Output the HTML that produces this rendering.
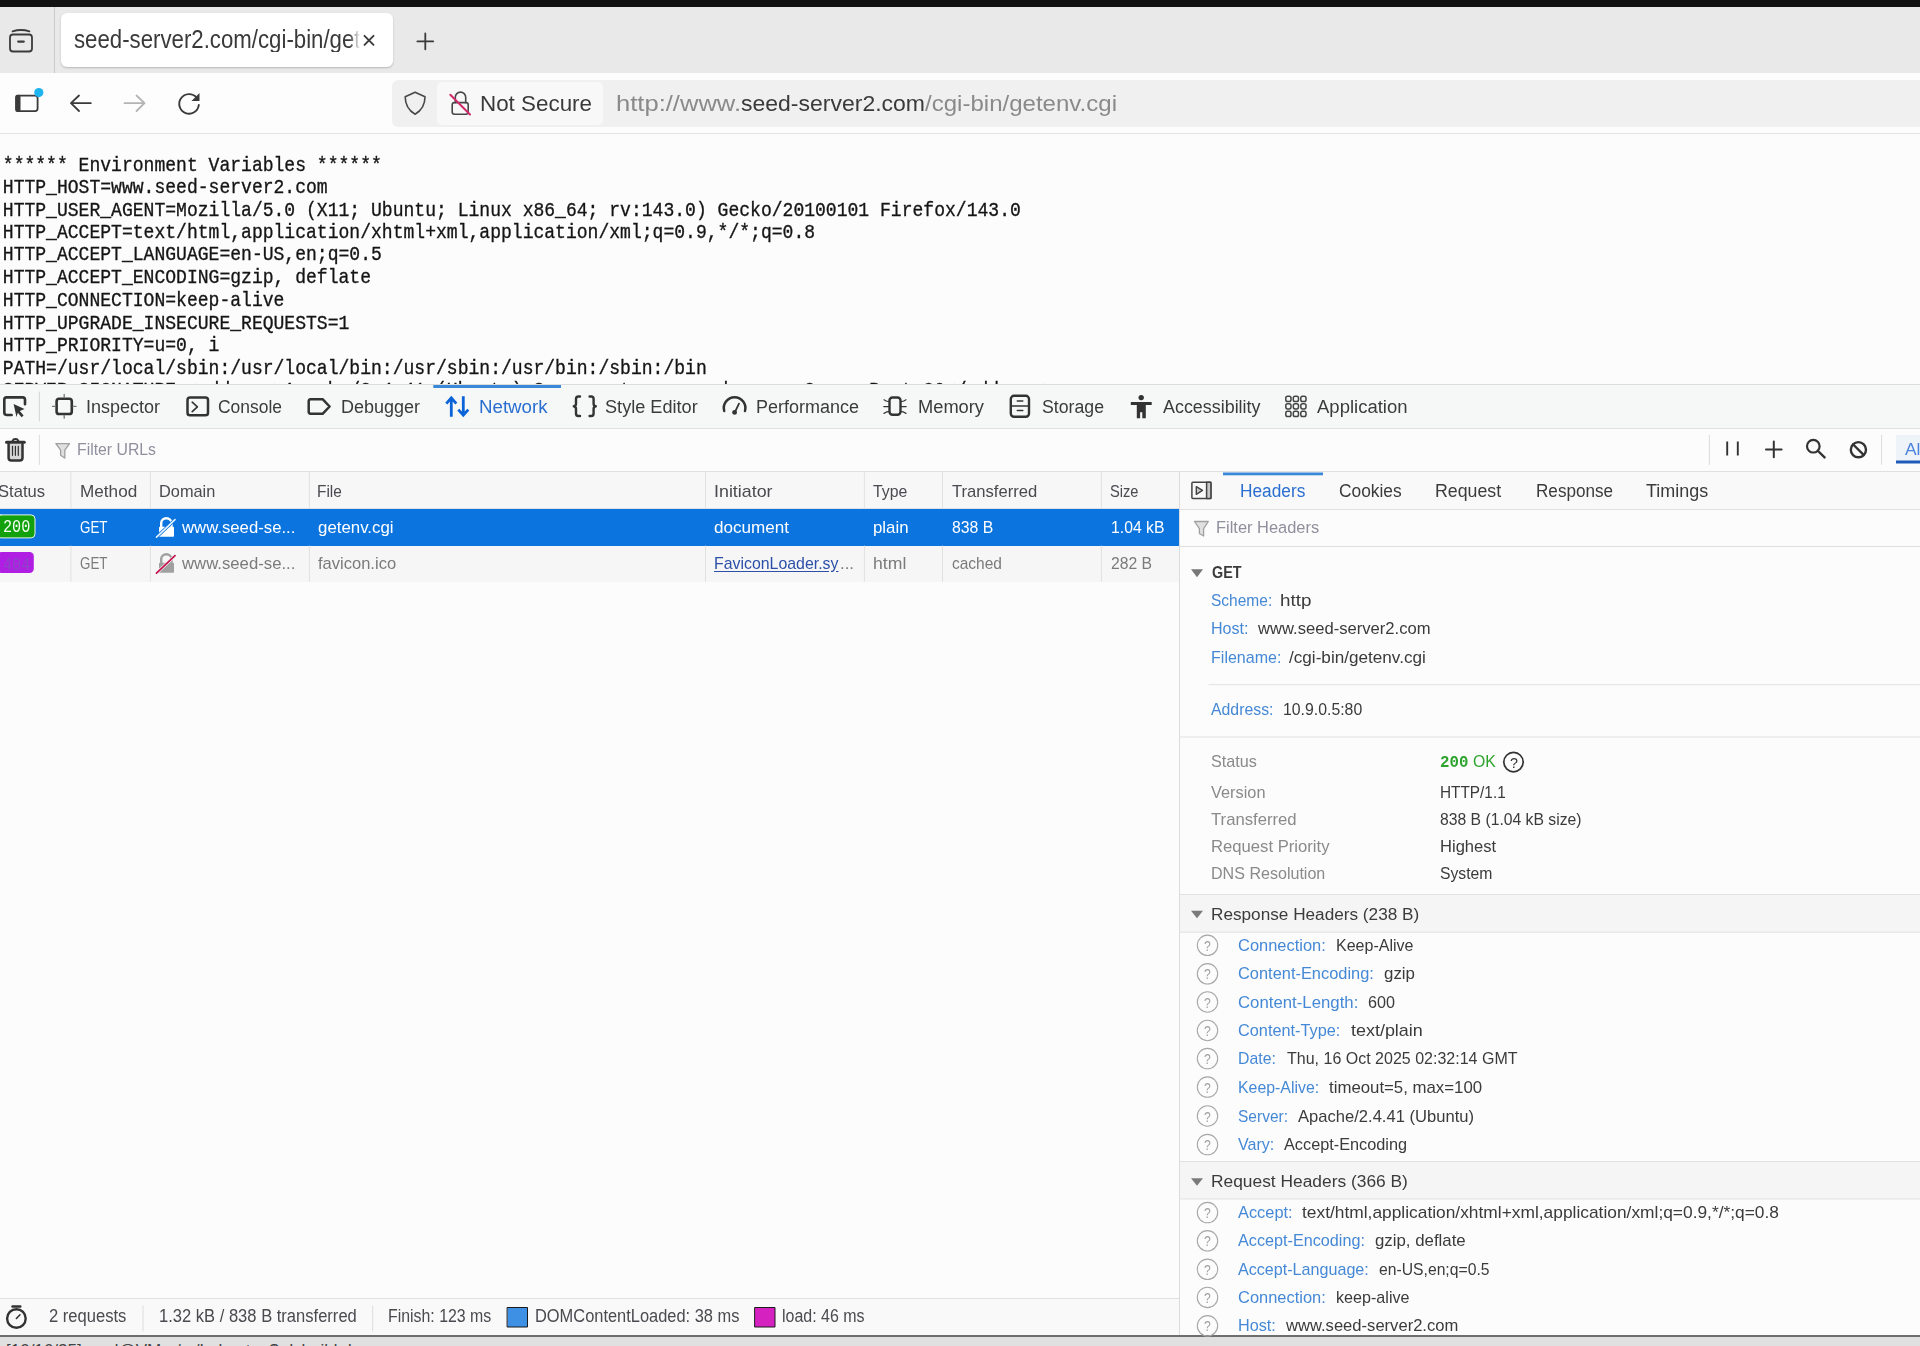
<!DOCTYPE html>
<html><head><meta charset="utf-8">
<style>
html,body{margin:0;padding:0;}
body{width:1920px;height:1346px;overflow:hidden;position:relative;background:#fcfcfc;font-family:"Liberation Sans",sans-serif;}
.a{position:absolute;}
.tx{position:absolute;white-space:pre;line-height:1;transform-origin:0 0;}
svg{position:absolute;overflow:visible;}
#topbar{left:0;top:0;width:1920px;height:7px;background:#121212;}
#tabbar{left:0;top:7px;width:1920px;height:66px;background:#e9e9e9;}
#tabdiv{left:54px;top:7px;width:1px;height:66px;background:#c9c9c9;}
#tab{left:61px;top:13px;width:332px;height:54px;background:#fff;border-radius:6px;box-shadow:0 1px 2px rgba(0,0,0,.22);}
#nav{left:0;top:73px;width:1920px;height:60px;background:#fdfdfd;}
#navline{left:0;top:133px;width:1920px;height:1px;background:#e3e3e3;}
#url{left:392px;top:79.5px;width:1540px;height:47.3px;background:#f0f0f0;border-radius:6px;}
#chip{left:436.5px;top:81.5px;width:166.5px;height:43.3px;background:#f8f8f8;border-radius:5px;}
#content{left:0;top:134px;width:1920px;height:250px;background:#fcfcfc;overflow:hidden;}
#pre{position:absolute;left:2.8px;top:20.1px;margin:0;font-family:"Liberation Mono",monospace;font-size:18.06px;line-height:20.09px;color:#151515;-webkit-text-stroke:0.3px #151515;white-space:pre;transform:scaleY(1.12);transform-origin:0 0;}
#dt{left:0;top:384px;width:1920px;height:952px;background:#fcfcfc;}
#dtline{left:0;top:384px;width:1920px;height:1px;background:#dcdcde;}
#toolbar{left:0;top:385px;width:1920px;height:43px;background:#f6f7f7;}
#tbline{left:0;top:428px;width:1920px;height:1px;background:#e0e0e2;}
#filterbar{left:0;top:429px;width:1920px;height:42px;background:#fcfcfc;}
#fbline{left:0;top:471px;width:1920px;height:1px;background:#e0e0e2;}
#thead{left:0;top:472px;width:1180px;height:37px;background:#f7f7f8;}
#theadline{left:0;top:508px;width:1180px;height:1px;background:#e0e0e2;}
#row1{left:0;top:509px;width:1179px;height:36.5px;background:#0b74de;}
#row2{left:0;top:545.5px;width:1179px;height:36px;background:#f6f6f7;}
.cd{position:absolute;width:1px;background:#e3e3e5;}
#vdiv{left:1179px;top:471px;width:1px;height:865px;background:#dcdcde;}
#ptabs{left:1180px;top:472px;width:740px;height:37px;background:#f9f9fa;}
#ptline{left:1180px;top:508.5px;width:740px;height:1px;background:#e0e0e2;}
#pfline{left:1180px;top:545.5px;width:740px;height:1px;background:#e0e0e2;}
#statusbar{left:0;top:1298.5px;width:1179px;height:37px;background:#f9f9fa;}
#sbline{left:0;top:1298px;width:1179px;height:1px;background:#e0e0e2;}
#bottomline{left:0;top:1335px;width:1920px;height:2px;background:#6e6e6e;}
#bottom{left:0;top:1337px;width:1920px;height:9px;background:#e0e0e0;}
.fade{-webkit-mask-image:linear-gradient(to right,#000 88%,transparent 100%);}
</style></head><body>
<div class="a" id="topbar"></div>
<div class="a" id="tabbar"></div>
<div class="a" id="tabdiv"></div>
<div class="a" id="tab"></div>
<div class="a" id="nav"></div>
<div class="a" id="navline"></div>
<div class="a" id="url"></div>
<div class="a" id="chip"></div>
<div class="a" id="content"><pre id="pre">****** Environment Variables ******
HTTP_HOST=www.seed-server2.com
HTTP_USER_AGENT=Mozilla/5.0 (X11; Ubuntu; Linux x86_64; rv:143.0) Gecko/20100101 Firefox/143.0
HTTP_ACCEPT=text/html,application/xhtml+xml,application/xml;q=0.9,*/*;q=0.8
HTTP_ACCEPT_LANGUAGE=en-US,en;q=0.5
HTTP_ACCEPT_ENCODING=gzip, deflate
HTTP_CONNECTION=keep-alive
HTTP_UPGRADE_INSECURE_REQUESTS=1
HTTP_PRIORITY=u=0, i
PATH=/usr/local/sbin:/usr/local/bin:/usr/sbin:/usr/bin:/sbin:/bin
SERVER_SIGNATURE=&lt;address&gt;Apache/2.4.41 (Ubuntu) Server at www.seed-server2.com Port 80&lt;/address&gt;
</pre></div>
<div class="a" id="dt"></div>
<div class="a" id="dtline"></div>
<div class="a" id="toolbar"></div>
<div class="a" id="tbline"></div>
<div class="a" id="filterbar"></div>
<div class="a" id="fbline"></div>
<div class="a" id="thead"></div>
<div class="a" id="theadline"></div>
<div class="a" id="row1"></div>
<div class="a" id="row2"></div>
<div class="a" id="vdiv"></div>
<div class="a" id="ptabs"></div>
<div class="a" id="ptline"></div>
<div class="a" id="pfline"></div>
<div class="a" id="statusbar"></div>
<div class="a" id="sbline"></div>
<div class="a" id="bottomline"></div>
<div class="a" id="bottom" style="overflow:hidden"><div style="position:absolute;left:6px;top:4.2px;font-family:'Liberation Sans',sans-serif;font-size:17px;line-height:20px;color:#444;white-space:pre;">[10/16/25]seed@VM:~/.../Labsetup$ dcbuild dcup</div></div>
<svg width="1920" height="1346" viewBox="0 0 1920 1346" style="left:0;top:0;position:absolute" fill="none" stroke-linecap="round" stroke-linejoin="round">
<!-- tab strip sidebar icon -->
<g stroke="#3c3c3c" stroke-width="1.8">
<rect x="10" y="34.5" width="22" height="17" rx="3"/>
<path d="M12.6 31.4 Q21 28.6 29.4 31.4"/>
<path d="M18.2 41.6 H23.8" stroke-width="2.2"/>
</g>
<!-- tab close x -->
<path d="M364.5 35.8 L373.5 44.8 M373.5 35.8 L364.5 44.8" stroke="#3a3a3a" stroke-width="1.9"/>
<!-- new tab + -->
<path d="M425.3 33.5 V49.3 M417.4 41.4 H433.2" stroke="#3a3a3a" stroke-width="1.8"/>
<!-- sidebar toggle nav -->
<rect x="16.2" y="95.6" width="21.4" height="15.5" rx="2.5" stroke="#3a3a3a" stroke-width="1.8"/>
<rect x="15.3" y="94.8" width="5.2" height="17.1" rx="2" fill="#3a3a3a"/>
<circle cx="38.8" cy="92.6" r="4.6" fill="#1eb4f0"/>
<!-- back arrow -->
<path d="M71 103.2 H90.8 M79 95.5 L71 103.2 L79 111" stroke="#3a3a3a" stroke-width="1.8"/>
<!-- forward arrow -->
<path d="M124.5 103.2 H144.5 M136.5 95.5 L144.5 103.2 L136.5 111" stroke="#b4b4b4" stroke-width="1.8"/>
<!-- reload -->
<path d="M196.5 97.5 A9.8 9.8 0 1 0 198.8 105" stroke="#3a3a3a" stroke-width="1.9"/>
<path d="M199.5 93 V101 H191.5 Z" fill="#3a3a3a"/>
<!-- shield -->
<path d="M415.1 92.2 L425 96.8 C425 104 422.5 110 415.1 114.2 C407.7 110 405.2 104 405.2 96.8 Z" stroke="#484848" stroke-width="1.6"/>
<!-- lock insecure -->
<g stroke="#484848" stroke-width="1.6">
<path d="M455.3 102.6 V97.3 A5.2 5.2 0 0 1 465.7 97.3 V102.6"/>
<rect x="452.2" y="102.6" width="16" height="11.6" rx="2.2"/>
</g>
<path d="M450.3 94.8 L470 114.5" stroke="#d02a68" stroke-width="2"/>

<!-- devtools toolbar icons -->
<g stroke="#333" stroke-width="2.6">
<!-- pick -->
<path d="M11.6 415 H6.5 A2.4 2.4 0 0 1 4.3 412.6 V399.7 A2.4 2.4 0 0 1 6.5 397.4 H22.7 A2.4 2.4 0 0 1 25 399.7 V404.3"/>
</g>
<path d="M13.6 404 L24.5 409 L19.8 411 L23.6 415.4 L21.6 417.2 L17.8 412.8 L16.5 417 Z" fill="#333"/>
<path d="M39.4 392 V421" stroke="#d4d4d6" stroke-width="1"/>
<!-- inspector -->
<rect x="56.6" y="398.8" width="15.2" height="15.2" rx="2.6" stroke="#333" stroke-width="2.6"/>
<path d="M64.2 394.5 V397.5 M64.2 415.3 V418.2 M52.5 406.4 H55.4 M73 406.4 H76" stroke="#777" stroke-width="1.3"/>
<!-- console -->
<rect x="187.5" y="397.5" width="20.5" height="17.8" rx="2.6" stroke="#333" stroke-width="2.5"/>
<path d="M192.2 402.2 L197.4 406.8 L192.2 411.6" stroke="#333" stroke-width="1.6"/>
<!-- debugger -->
<path d="M310.6 399.2 H322.6 L329.6 406.5 L322.6 413.8 H310.6 A2 2 0 0 1 308.7 411.8 V401.2 A2 2 0 0 1 310.6 399.2 Z" stroke="#333" stroke-width="2.5"/>
<!-- network -->
<g stroke="#0b63d8" stroke-width="2.8" stroke-linecap="butt" stroke-linejoin="miter">
<path d="M451.3 416.7 V397.5 M446.3 403.6 L451.3 397.8 L456.3 403.6"/>
<path d="M463.3 396.2 V415.5 M458.3 409.6 L463.3 415.2 L468.3 409.6"/>
</g>
<!-- braces -->
<g stroke="#333" stroke-width="2.4">
<path d="M580 396.5 H578.5 A2.5 2.5 0 0 0 576 399 V403.8 A2.6 2.6 0 0 1 573.8 406.3 A2.6 2.6 0 0 1 576 408.8 V413.6 A2.5 2.5 0 0 0 578.5 416 H580"/>
<path d="M589.6 396.5 H591.1 A2.5 2.5 0 0 1 593.6 399 V403.8 A2.6 2.6 0 0 0 595.8 406.3 A2.6 2.6 0 0 0 593.6 408.8 V413.6 A2.5 2.5 0 0 1 591.1 416 H589.6"/>
</g>
<!-- performance -->
<path d="M724.2 411 A10.8 10.8 0 1 1 745 411" stroke="#333" stroke-width="2.5"/>
<path d="M734.8 412.3 L739 403.6" stroke="#333" stroke-width="1.8"/>
<circle cx="734.6" cy="412.4" r="2.4" fill="#333"/>
<!-- memory -->
<rect x="889.5" y="397.5" width="11" height="17.3" rx="3" stroke="#333" stroke-width="2.4"/>
<g stroke="#333" stroke-width="1.2">
<path d="M888.5 401.5 C886 401.5 885.5 400.5 884 399.8 M888.5 406.6 H883.8 M888.5 411.7 C886 411.7 885.5 412.7 884 413.4"/>
<path d="M901.5 401.5 C904 401.5 904.5 400.5 906 399.8 M901.5 406.6 H906.2 M901.5 411.7 C904 411.7 904.5 412.7 906 413.4"/>
</g>
<!-- storage -->
<rect x="1010.8" y="395.8" width="18.2" height="21" rx="3.2" stroke="#333" stroke-width="2.4"/>
<path d="M1011 405.9 H1029" stroke="#333" stroke-width="1.5"/>
<path d="M1017.3 401 H1022.8 M1017.3 410.4 H1022.8" stroke="#333" stroke-width="1.5"/>
<!-- accessibility -->
<circle cx="1141.2" cy="397.6" r="2.7" fill="#333"/>
<path d="M1130.8 402 H1151.7 V405 H1145.8 V418.3 H1142.3 V412.2 H1140.1 V418.3 H1136.8 V405 H1130.8 Z" fill="#333"/>
<!-- application grid -->
<g stroke="#444" stroke-width="1.5">
<rect x="1285.8" y="396.3" width="5.2" height="5.2" rx="1.8"/>
<rect x="1293.3" y="396.3" width="5.2" height="5.2" rx="1.8"/>
<rect x="1300.8" y="396.3" width="5.2" height="5.2" rx="1.8"/>
<rect x="1285.8" y="403.7" width="5.2" height="5.2" rx="1.8"/>
<rect x="1293.3" y="403.7" width="5.2" height="5.2" rx="1.8"/>
<rect x="1300.8" y="403.7" width="5.2" height="5.2" rx="1.8"/>
<rect x="1285.8" y="411.3" width="5.2" height="5.2" rx="1.8"/>
<rect x="1293.3" y="411.3" width="5.2" height="5.2" rx="1.8"/>
<rect x="1300.8" y="411.3" width="5.2" height="5.2" rx="1.8"/>
</g>
<!-- network selected underline -->
<rect x="433.3" y="385" width="127.7" height="3" fill="#3b87d8"/>

<!-- filter bar -->
<g stroke="#333">
<path d="M6.5 442.3 H24.3" stroke-width="3"/>
<path d="M12.6 440.8 A3 2.6 0 0 1 18.3 440.8" stroke-width="2" />
<path d="M8.6 444 V457.8 A2.8 2.8 0 0 0 11.4 460.6 H19.7 A2.8 2.8 0 0 0 22.5 457.8 V444" stroke-width="2.5" fill="#d6d6d6"/>
<path d="M12.5 446.3 V455.3 M15.4 446.3 V455.3 M18.3 446.3 V455.3" stroke-width="1.2"/>
</g>
<path d="M39.4 435.3 V464.5" stroke="#dcdcde" stroke-width="1"/>
<path d="M55.9 443.6 H69.5 L64.8 450.2 V458 L60.6 455.3 V450.2 Z" stroke="#a0a0a0" stroke-width="1.3" fill="#e0e0e0"/>
<!-- right side of filter bar -->
<path d="M1709.4 435.3 V464.5 M1881.6 435.3 V464.5" stroke="#dcdcde" stroke-width="1"/>
<path d="M1727.2 441.6 V455.4 M1737.8 441.6 V455.4" stroke="#333" stroke-width="1.9" stroke-linecap="butt"/>
<path d="M1773.8 441.5 V457.3 M1766 449.4 H1781.6" stroke="#333" stroke-width="2"/>
<circle cx="1813.3" cy="446.2" r="6.3" stroke="#333" stroke-width="2.2"/>
<path d="M1818 451 L1824.6 457.4" stroke="#333" stroke-width="2.4"/>
<circle cx="1858.4" cy="449.7" r="7.6" stroke="#333" stroke-width="2.4"/>
<path d="M1853.2 444.5 L1863.6 454.9" stroke="#333" stroke-width="2.4"/>
<rect x="1896" y="435" width="30" height="28" fill="#eef2f9"/>
<rect x="1896" y="460.5" width="30" height="3" fill="#1f5cb8"/>

<!-- table column dividers header -->
<g stroke="#e1e1e3" stroke-width="1">
<path d="M70.9 472 V508 M150.4 472 V508 M309.4 472 V508 M705.5 472 V508 M864.4 472 V508 M942.5 472 V508 M1101.4 472 V508"/>
<path d="M70.9 546 V581.5 M150.4 546 V581.5 M309.4 546 V581.5 M705.5 546 V581.5 M864.4 546 V581.5 M942.5 546 V581.5 M1101.4 546 V581.5"/>
</g>
<!-- badges -->
<rect x="-3" y="514.9" width="38" height="23" rx="4" fill="#12a00c" stroke="#e8f4e8" stroke-width="1"/>
<rect x="-3" y="552.1" width="36.8" height="20.9" rx="4.2" fill="#b11ee3"/>
<!-- domain lock row1 -->
<g>
<path d="M161.2 526.7 V523 A5 4.6 0 0 1 171.5 523 V526.7" stroke="#fff" stroke-width="2.4"/>
<rect x="159" y="526.7" width="15" height="10" rx="0.8" fill="#fff"/>
<path d="M156.5 537.2 L175 519.6" stroke="#0b74de" stroke-width="3.2"/>
<path d="M156.5 537.2 L175 519.6" stroke="#e6f3ff" stroke-width="1.6"/>
</g>
<g>
<path d="M161.2 562.7 V559 A5 4.6 0 0 1 171.5 559 V562.7" stroke="#a0a0a0" stroke-width="2.4"/>
<rect x="159" y="562.7" width="15" height="10" rx="0.8" fill="#a0a0a0"/>
<path d="M156.5 573.2 L175 555.6" stroke="#f5f5f6" stroke-width="3"/>
<path d="M156.5 573.2 L175 555.6" stroke="#c4164f" stroke-width="1.8"/>
</g>

<!-- side panel -->
<rect x="1191.9" y="482.2" width="19" height="16.4" rx="1" stroke="#444" stroke-width="1.5"/>
<rect x="1206.6" y="482.2" width="4.3" height="16.4" fill="#c8c8c8" stroke="#444" stroke-width="1.5"/>
<path d="M1196.3 486.6 L1202.5 490.4 L1196.3 494.3 Z" stroke="#444" stroke-width="1.4" fill="#c8c8c8"/>
<rect x="1223" y="472.5" width="100" height="2.8" fill="#3b87d8"/>
<path d="M1194.5 521.5 H1208.3 L1203.6 528.6 V536 L1199.4 533.5 V528.6 Z" stroke="#a0a0a0" stroke-width="1.3" fill="#e0e0e0"/>
<!-- GET triangle -->
<path d="M1191 569.2 H1203 L1197 577.2 Z" fill="#777"/>
<!-- separators -->
<path d="M1209 684.7 H1920" stroke="#e1e1e3" stroke-width="1"/>
<path d="M1180 737 H1920" stroke="#e1e1e3" stroke-width="1"/>
<!-- status ? -->
<circle cx="1513.5" cy="762.1" r="9.7" stroke="#333" stroke-width="1.7"/>
<!-- sections -->
<rect x="1180" y="894.5" width="740" height="37.7" fill="#f5f5f6"/>
<path d="M1180 894.5 H1920 M1180 932.2 H1920" stroke="#e1e1e3" stroke-width="1"/>
<path d="M1191 910.8 H1203 L1197 918.2 Z" fill="#7a7a7a"/>
<rect x="1180" y="1161.5" width="740" height="37.5" fill="#f5f5f6"/>
<path d="M1180 1161.5 H1920 M1180 1199 H1920" stroke="#e1e1e3" stroke-width="1"/>
<path d="M1191 1178.3 H1203 L1197 1185.7 Z" fill="#7a7a7a"/>
<circle cx="1207.5" cy="945.3" r="10.2" stroke="#a8a8a8" stroke-width="1.1"/>
<circle cx="1207.5" cy="973.8" r="10.2" stroke="#a8a8a8" stroke-width="1.1"/>
<circle cx="1207.5" cy="1002.0" r="10.2" stroke="#a8a8a8" stroke-width="1.1"/>
<circle cx="1207.5" cy="1030.5" r="10.2" stroke="#a8a8a8" stroke-width="1.1"/>
<circle cx="1207.5" cy="1058.6" r="10.2" stroke="#a8a8a8" stroke-width="1.1"/>
<circle cx="1207.5" cy="1087.1" r="10.2" stroke="#a8a8a8" stroke-width="1.1"/>
<circle cx="1207.5" cy="1116.0" r="10.2" stroke="#a8a8a8" stroke-width="1.1"/>
<circle cx="1207.5" cy="1144.6" r="10.2" stroke="#a8a8a8" stroke-width="1.1"/>
<circle cx="1207.5" cy="1212.6" r="10.2" stroke="#a8a8a8" stroke-width="1.1"/>
<circle cx="1207.5" cy="1240.8" r="10.2" stroke="#a8a8a8" stroke-width="1.1"/>
<circle cx="1207.5" cy="1269.3" r="10.2" stroke="#a8a8a8" stroke-width="1.1"/>
<circle cx="1207.5" cy="1297.4" r="10.2" stroke="#a8a8a8" stroke-width="1.1"/>
<circle cx="1207.5" cy="1325.8" r="10.2" stroke="#a8a8a8" stroke-width="1.1"/>

<!-- status bar -->
<g stroke="#333">
<circle cx="16.4" cy="1318.5" r="9.3" stroke-width="2.4"/>
<path d="M12.5 1306.5 H20.3" stroke-width="2.4"/>
<path d="M16.4 1318.5 L20 1314.8" stroke-width="1.6"/>
</g>
<path d="M143 1306 V1331 M372.7 1306 V1331" stroke="#dcdcde" stroke-width="1"/>
<rect x="507.5" y="1307.5" width="20" height="19.5" fill="#3d90e4" stroke="#1a1a1a" stroke-width="1"/>
<rect x="755" y="1307.5" width="20" height="19.5" fill="#d421bf" stroke="#1a1a1a" stroke-width="1"/>
</svg>

<div class="tx" id="t0" style="left:73.50px;top:27.00px;font-size:25px;color:#3a3a3a;font-family:'Liberation Sans', sans-serif;transform:scale(0.8887,1.0000);-webkit-mask-image:linear-gradient(to right,#000 0,#000 calc(100% - 12px),transparent 100%);">seed-server2.com/cgi-bin/get</div>
<div class="tx" id="t1" style="left:480.00px;top:93.00px;font-size:22.5px;color:#3a3a3a;font-family:'Liberation Sans', sans-serif;transform:scale(0.9950,1.0000);">Not Secure</div>
<div class="tx" id="t2" style="left:616.00px;top:93.00px;font-size:22px;color:#8a8a8a;font-family:'Liberation Sans', sans-serif;transform:scale(1.1618,1.0000);">http://www.</div>
<div class="tx" id="t3" style="left:741.00px;top:93.00px;font-size:22px;color:#3a3a3a;font-family:'Liberation Sans', sans-serif;transform:scale(1.0450,1.0000);">seed-server2.com</div>
<div class="tx" id="t4" style="left:925.00px;top:93.00px;font-size:22px;color:#8a8a8a;font-family:'Liberation Sans', sans-serif;transform:scale(1.0928,1.0000);">/cgi-bin/getenv.cgi</div>
<div class="tx" id="t5" style="left:86.00px;top:399.00px;font-size:17.6px;color:#3b3b3b;font-family:'Liberation Sans', sans-serif;transform:scale(1.0225,1.0000);">Inspector</div>
<div class="tx" id="t6" style="left:218.00px;top:399.00px;font-size:17.6px;color:#3b3b3b;font-family:'Liberation Sans', sans-serif;transform:scale(0.9913,1.0000);">Console</div>
<div class="tx" id="t7" style="left:341.00px;top:399.00px;font-size:17.6px;color:#3b3b3b;font-family:'Liberation Sans', sans-serif;transform:scale(1.0222,1.0000);">Debugger</div>
<div class="tx" id="t8" style="left:479.00px;top:399.00px;font-size:17.6px;color:#2a6fd0;font-family:'Liberation Sans', sans-serif;transform:scale(1.0631,1.0000);">Network</div>
<div class="tx" id="t9" style="left:605.30px;top:399.00px;font-size:17.6px;color:#3b3b3b;font-family:'Liberation Sans', sans-serif;transform:scale(1.0304,1.0000);">Style Editor</div>
<div class="tx" id="t10" style="left:756.00px;top:399.00px;font-size:17.6px;color:#3b3b3b;font-family:'Liberation Sans', sans-serif;transform:scale(1.0226,1.0000);">Performance</div>
<div class="tx" id="t11" style="left:918.00px;top:399.00px;font-size:17.6px;color:#3b3b3b;font-family:'Liberation Sans', sans-serif;transform:scale(1.0386,1.0000);">Memory</div>
<div class="tx" id="t12" style="left:1041.70px;top:399.00px;font-size:17.6px;color:#3b3b3b;font-family:'Liberation Sans', sans-serif;transform:scale(1.0069,1.0000);">Storage</div>
<div class="tx" id="t13" style="left:1162.50px;top:399.00px;font-size:17.6px;color:#3b3b3b;font-family:'Liberation Sans', sans-serif;transform:scale(1.0176,1.0000);">Accessibility</div>
<div class="tx" id="t14" style="left:1317.00px;top:399.00px;font-size:17.6px;color:#3b3b3b;font-family:'Liberation Sans', sans-serif;transform:scale(1.0514,1.0000);">Application</div>
<div class="tx" id="t15" style="left:77.00px;top:441.00px;font-size:16.5px;color:#8f8f9d;font-family:'Liberation Sans', sans-serif;transform:scale(0.9574,1.0000);">Filter URLs</div>
<div class="tx" id="t16" style="left:1905.00px;top:441.00px;font-size:17px;color:#4a82dc;font-family:'Liberation Sans', sans-serif;transform:scale(1.0248,1.0000);">Al</div>
<div class="tx" id="t17" style="left:-2.00px;top:483.00px;font-size:17px;color:#4a4a4f;font-family:'Liberation Sans', sans-serif;transform:scale(0.9750,1.0000);">Status</div>
<div class="tx" id="t18" style="left:79.70px;top:483.00px;font-size:17px;color:#4a4a4f;font-family:'Liberation Sans', sans-serif;transform:scale(1.0088,1.0000);">Method</div>
<div class="tx" id="t19" style="left:159.00px;top:483.00px;font-size:17px;color:#4a4a4f;font-family:'Liberation Sans', sans-serif;transform:scale(0.9609,1.0000);">Domain</div>
<div class="tx" id="t20" style="left:317.30px;top:483.00px;font-size:17px;color:#4a4a4f;font-family:'Liberation Sans', sans-serif;transform:scale(0.9086,1.0000);">File</div>
<div class="tx" id="t21" style="left:713.90px;top:483.00px;font-size:17px;color:#4a4a4f;font-family:'Liberation Sans', sans-serif;transform:scale(1.0493,1.0000);">Initiator</div>
<div class="tx" id="t22" style="left:872.70px;top:483.00px;font-size:17px;color:#4a4a4f;font-family:'Liberation Sans', sans-serif;transform:scale(0.9306,1.0000);">Type</div>
<div class="tx" id="t23" style="left:952.00px;top:483.00px;font-size:17px;color:#4a4a4f;font-family:'Liberation Sans', sans-serif;transform:scale(0.9778,1.0000);">Transferred</div>
<div class="tx" id="t24" style="left:1110.00px;top:483.00px;font-size:17px;color:#4a4a4f;font-family:'Liberation Sans', sans-serif;transform:scale(0.8616,1.0000);">Size</div>
<div class="tx" id="t25" style="left:80.00px;top:519.00px;font-size:17px;color:#ffffff;font-family:'Liberation Sans', sans-serif;transform:scale(0.7868,1.0000);">GET</div>
<div class="tx" id="t26" style="left:181.60px;top:519.00px;font-size:17px;color:#ffffff;font-family:'Liberation Sans', sans-serif;transform:scale(0.9838,1.0000);">www.seed-se...</div>
<div class="tx" id="t27" style="left:317.70px;top:519.00px;font-size:17px;color:#ffffff;font-family:'Liberation Sans', sans-serif;transform:scale(0.9917,1.0000);">getenv.cgi</div>
<div class="tx" id="t28" style="left:714.00px;top:519.00px;font-size:17px;color:#ffffff;font-family:'Liberation Sans', sans-serif;transform:scale(1.0044,1.0000);">document</div>
<div class="tx" id="t29" style="left:872.50px;top:519.00px;font-size:17px;color:#ffffff;font-family:'Liberation Sans', sans-serif;transform:scale(0.9883,1.0000);">plain</div>
<div class="tx" id="t30" style="left:952.00px;top:519.00px;font-size:17px;color:#ffffff;font-family:'Liberation Sans', sans-serif;transform:scale(0.9294,1.0000);">838 B</div>
<div class="tx" id="t31" style="left:1110.60px;top:519.00px;font-size:17px;color:#ffffff;font-family:'Liberation Sans', sans-serif;transform:scale(0.9262,1.0000);">1.04 kB</div>
<div class="tx" id="t32" style="left:80.00px;top:555.00px;font-size:17px;color:#7b7b7b;font-family:'Liberation Sans', sans-serif;transform:scale(0.7868,1.0000);">GET</div>
<div class="tx" id="t33" style="left:181.60px;top:555.00px;font-size:17px;color:#7b7b7b;font-family:'Liberation Sans', sans-serif;transform:scale(0.9838,1.0000);">www.seed-se...</div>
<div class="tx" id="t34" style="left:317.70px;top:555.00px;font-size:17px;color:#7b7b7b;font-family:'Liberation Sans', sans-serif;transform:scale(0.9723,1.0000);">favicon.ico</div>
<div class="tx" id="t35" style="left:714.00px;top:555.00px;font-size:17px;color:#2c4fa8;font-family:'Liberation Sans', sans-serif;transform:scale(0.9343,1.0000);text-decoration:underline;text-underline-offset:2px;">FaviconLoader.sy</div>
<div class="tx" id="t36" style="left:840.00px;top:555.00px;font-size:17px;color:#7b7b7b;font-family:'Liberation Sans', sans-serif;transform:scale(0.9879,1.0000);">...</div>
<div class="tx" id="t37" style="left:872.50px;top:555.00px;font-size:17px;color:#7b7b7b;font-family:'Liberation Sans', sans-serif;transform:scale(1.0366,1.0000);">html</div>
<div class="tx" id="t38" style="left:952.00px;top:555.00px;font-size:17px;color:#7b7b7b;font-family:'Liberation Sans', sans-serif;transform:scale(0.9119,1.0000);">cached</div>
<div class="tx" id="t39" style="left:1110.60px;top:555.00px;font-size:17px;color:#7b7b7b;font-family:'Liberation Sans', sans-serif;transform:scale(0.9249,1.0000);">282 B</div>
<div class="tx" id="t40" style="left:1239.60px;top:483.00px;font-size:17.6px;color:#2a6fd0;font-family:'Liberation Sans', sans-serif;transform:scale(0.9832,1.0000);">Headers</div>
<div class="tx" id="t41" style="left:1339.00px;top:483.00px;font-size:17.6px;color:#3b3b3b;font-family:'Liberation Sans', sans-serif;transform:scale(0.9862,1.0000);">Cookies</div>
<div class="tx" id="t42" style="left:1435.40px;top:483.00px;font-size:17.6px;color:#3b3b3b;font-family:'Liberation Sans', sans-serif;transform:scale(1.0102,1.0000);">Request</div>
<div class="tx" id="t43" style="left:1535.50px;top:483.00px;font-size:17.6px;color:#3b3b3b;font-family:'Liberation Sans', sans-serif;transform:scale(0.9731,1.0000);">Response</div>
<div class="tx" id="t44" style="left:1646.40px;top:483.00px;font-size:17.6px;color:#3b3b3b;font-family:'Liberation Sans', sans-serif;transform:scale(1.0207,1.0000);">Timings</div>
<div class="tx" id="t45" style="left:1215.60px;top:520.00px;font-size:16.8px;color:#8f8f9d;font-family:'Liberation Sans', sans-serif;transform:scale(0.9787,1.0000);">Filter Headers</div>
<div class="tx" id="t46" style="left:1211.50px;top:564.00px;font-size:17px;color:#3b3b3b;font-family:'Liberation Sans', sans-serif;font-weight:700;transform:scale(0.8440,1.0000);">GET</div>
<div class="tx" id="t47" style="left:1210.80px;top:592.00px;font-size:17px;color:#4589d6;font-family:'Liberation Sans', sans-serif;transform:scale(0.9122,1.0000);">Scheme:</div>
<div class="tx" id="t48" style="left:1280.30px;top:592.00px;font-size:17px;color:#3b3b3b;font-family:'Liberation Sans', sans-serif;transform:scale(1.1072,1.0000);">http</div>
<div class="tx" id="t49" style="left:1210.80px;top:620.00px;font-size:17px;color:#4589d6;font-family:'Liberation Sans', sans-serif;transform:scale(0.9449,1.0000);">Host:</div>
<div class="tx" id="t50" style="left:1257.50px;top:620.00px;font-size:17px;color:#3b3b3b;font-family:'Liberation Sans', sans-serif;transform:scale(0.9764,1.0000);">www.seed-server2.com</div>
<div class="tx" id="t51" style="left:1210.80px;top:649.00px;font-size:17px;color:#4589d6;font-family:'Liberation Sans', sans-serif;transform:scale(0.9445,1.0000);">Filename:</div>
<div class="tx" id="t52" style="left:1289.00px;top:649.00px;font-size:17px;color:#3b3b3b;font-family:'Liberation Sans', sans-serif;transform:scale(1.0076,1.0000);">/cgi-bin/getenv.cgi</div>
<div class="tx" id="t53" style="left:1210.80px;top:701.00px;font-size:17px;color:#4589d6;font-family:'Liberation Sans', sans-serif;transform:scale(0.9315,1.0000);">Address:</div>
<div class="tx" id="t54" style="left:1283.30px;top:701.00px;font-size:17px;color:#3b3b3b;font-family:'Liberation Sans', sans-serif;transform:scale(0.9309,1.0000);">10.9.0.5:80</div>
<div class="tx" id="t55" style="left:1210.70px;top:753.00px;font-size:17px;color:#8a8a8a;font-family:'Liberation Sans', sans-serif;transform:scale(0.9522,1.0000);">Status</div>
<div class="tx" id="t56" style="left:1440.30px;top:754.00px;font-size:17px;color:#2ea42e;font-family:'Liberation Mono', monospace;font-weight:700;transform:scale(0.9278,1.0000);">200</div>
<div class="tx" id="t57" style="left:1473.00px;top:753.00px;font-size:17px;color:#2ea42e;font-family:'Liberation Sans', sans-serif;transform:scale(0.9282,1.0000);">OK</div>
<div class="tx" id="t58" style="left:1210.70px;top:784.00px;font-size:17px;color:#8a8a8a;font-family:'Liberation Sans', sans-serif;transform:scale(0.9611,1.0000);">Version</div>
<div class="tx" id="t59" style="left:1440.30px;top:784.00px;font-size:17px;color:#3b3b3b;font-family:'Liberation Sans', sans-serif;transform:scale(0.9031,1.0000);">HTTP/1.1</div>
<div class="tx" id="t60" style="left:1210.70px;top:811.00px;font-size:17px;color:#8a8a8a;font-family:'Liberation Sans', sans-serif;transform:scale(0.9813,1.0000);">Transferred</div>
<div class="tx" id="t61" style="left:1440.30px;top:811.00px;font-size:17px;color:#3b3b3b;font-family:'Liberation Sans', sans-serif;transform:scale(0.9244,1.0000);">838 B (1.04 kB size)</div>
<div class="tx" id="t62" style="left:1210.70px;top:838.00px;font-size:17px;color:#8a8a8a;font-family:'Liberation Sans', sans-serif;transform:scale(0.9798,1.0000);">Request Priority</div>
<div class="tx" id="t63" style="left:1440.30px;top:838.00px;font-size:17px;color:#3b3b3b;font-family:'Liberation Sans', sans-serif;transform:scale(0.9733,1.0000);">Highest</div>
<div class="tx" id="t64" style="left:1210.70px;top:865.00px;font-size:17px;color:#8a8a8a;font-family:'Liberation Sans', sans-serif;transform:scale(0.9450,1.0000);">DNS Resolution</div>
<div class="tx" id="t65" style="left:1440.30px;top:865.00px;font-size:17px;color:#3b3b3b;font-family:'Liberation Sans', sans-serif;transform:scale(0.9261,1.0000);">System</div>
<div class="tx" id="t66" style="left:1211.40px;top:906.00px;font-size:17.3px;color:#3b3b3b;font-family:'Liberation Sans', sans-serif;transform:scale(0.9942,1.0000);">Response Headers (238 B)</div>
<div class="tx" id="t67" style="left:1238.40px;top:937.00px;font-size:17px;color:#4589d6;font-family:'Liberation Sans', sans-serif;transform:scale(0.9682,1.0000);">Connection:</div>
<div class="tx" id="t68" style="left:1336.00px;top:937.00px;font-size:17px;color:#3b3b3b;font-family:'Liberation Sans', sans-serif;transform:scale(0.9414,1.0000);">Keep-Alive</div>
<div class="tx" id="t69" style="left:1238.40px;top:965.00px;font-size:17px;color:#4589d6;font-family:'Liberation Sans', sans-serif;transform:scale(0.9650,1.0000);">Content-Encoding:</div>
<div class="tx" id="t70" style="left:1384.00px;top:965.00px;font-size:17px;color:#3b3b3b;font-family:'Liberation Sans', sans-serif;transform:scale(0.9940,1.0000);">gzip</div>
<div class="tx" id="t71" style="left:1238.40px;top:994.00px;font-size:17px;color:#4589d6;font-family:'Liberation Sans', sans-serif;transform:scale(0.9867,1.0000);">Content-Length:</div>
<div class="tx" id="t72" style="left:1368.40px;top:994.00px;font-size:17px;color:#3b3b3b;font-family:'Liberation Sans', sans-serif;transform:scale(0.9515,1.0000);">600</div>
<div class="tx" id="t73" style="left:1238.40px;top:1022.00px;font-size:17px;color:#4589d6;font-family:'Liberation Sans', sans-serif;transform:scale(0.9580,1.0000);">Content-Type:</div>
<div class="tx" id="t74" style="left:1350.50px;top:1022.00px;font-size:17px;color:#3b3b3b;font-family:'Liberation Sans', sans-serif;transform:scale(1.0552,1.0000);">text/plain</div>
<div class="tx" id="t75" style="left:1238.40px;top:1050.00px;font-size:17px;color:#4589d6;font-family:'Liberation Sans', sans-serif;transform:scale(0.9313,1.0000);">Date:</div>
<div class="tx" id="t76" style="left:1287.20px;top:1050.00px;font-size:17px;color:#3b3b3b;font-family:'Liberation Sans', sans-serif;transform:scale(0.9418,1.0000);">Thu, 16 Oct 2025 02:32:14 GMT</div>
<div class="tx" id="t77" style="left:1238.40px;top:1079.00px;font-size:17px;color:#4589d6;font-family:'Liberation Sans', sans-serif;transform:scale(0.9340,1.0000);">Keep-Alive:</div>
<div class="tx" id="t78" style="left:1329.40px;top:1079.00px;font-size:17px;color:#3b3b3b;font-family:'Liberation Sans', sans-serif;transform:scale(0.9878,1.0000);">timeout=5, max=100</div>
<div class="tx" id="t79" style="left:1238.40px;top:1108.00px;font-size:17px;color:#4589d6;font-family:'Liberation Sans', sans-serif;transform:scale(0.9125,1.0000);">Server:</div>
<div class="tx" id="t80" style="left:1298.00px;top:1108.00px;font-size:17px;color:#3b3b3b;font-family:'Liberation Sans', sans-serif;transform:scale(0.9750,1.0000);">Apache/2.4.41 (Ubuntu)</div>
<div class="tx" id="t81" style="left:1238.40px;top:1136.00px;font-size:17px;color:#4589d6;font-family:'Liberation Sans', sans-serif;transform:scale(0.9448,1.0000);">Vary:</div>
<div class="tx" id="t82" style="left:1284.00px;top:1136.00px;font-size:17px;color:#3b3b3b;font-family:'Liberation Sans', sans-serif;transform:scale(0.9577,1.0000);">Accept-Encoding</div>
<div class="tx" id="t83" style="left:1211.40px;top:1173.00px;font-size:17.3px;color:#3b3b3b;font-family:'Liberation Sans', sans-serif;transform:scale(1.0048,1.0000);">Request Headers (366 B)</div>
<div class="tx" id="t84" style="left:1238.40px;top:1204.00px;font-size:17px;color:#4589d6;font-family:'Liberation Sans', sans-serif;transform:scale(0.9629,1.0000);">Accept:</div>
<div class="tx" id="t85" style="left:1301.60px;top:1204.00px;font-size:17px;color:#3b3b3b;font-family:'Liberation Sans', sans-serif;transform:scale(1.0208,1.0000);">text/html,application/xhtml+xml,application/xml;q=0.9,*/*;q=0.8</div>
<div class="tx" id="t86" style="left:1238.40px;top:1232.00px;font-size:17px;color:#4589d6;font-family:'Liberation Sans', sans-serif;transform:scale(0.9523,1.0000);">Accept-Encoding:</div>
<div class="tx" id="t87" style="left:1375.00px;top:1232.00px;font-size:17px;color:#3b3b3b;font-family:'Liberation Sans', sans-serif;transform:scale(0.9892,1.0000);">gzip, deflate</div>
<div class="tx" id="t88" style="left:1238.40px;top:1261.00px;font-size:17px;color:#4589d6;font-family:'Liberation Sans', sans-serif;transform:scale(0.9478,1.0000);">Accept-Language:</div>
<div class="tx" id="t89" style="left:1379.00px;top:1261.00px;font-size:17px;color:#3b3b3b;font-family:'Liberation Sans', sans-serif;transform:scale(0.9242,1.0000);">en-US,en;q=0.5</div>
<div class="tx" id="t90" style="left:1238.40px;top:1289.00px;font-size:17px;color:#4589d6;font-family:'Liberation Sans', sans-serif;transform:scale(0.9682,1.0000);">Connection:</div>
<div class="tx" id="t91" style="left:1336.00px;top:1289.00px;font-size:17px;color:#3b3b3b;font-family:'Liberation Sans', sans-serif;transform:scale(0.9484,1.0000);">keep-alive</div>
<div class="tx" id="t92" style="left:1238.40px;top:1317.00px;font-size:17px;color:#4589d6;font-family:'Liberation Sans', sans-serif;transform:scale(0.9537,1.0000);">Host:</div>
<div class="tx" id="t93" style="left:1286.00px;top:1317.00px;font-size:17px;color:#3b3b3b;font-family:'Liberation Sans', sans-serif;transform:scale(0.9753,1.0000);">www.seed-server2.com</div>
<div class="tx" id="t94" style="left:49.20px;top:1308.00px;font-size:17.5px;color:#4a4a4f;font-family:'Liberation Sans', sans-serif;transform:scale(0.9472,1.0000);">2 requests</div>
<div class="tx" id="t95" style="left:158.50px;top:1308.00px;font-size:17.5px;color:#4a4a4f;font-family:'Liberation Sans', sans-serif;transform:scale(0.9457,1.0000);">1.32 kB / 838 B transferred</div>
<div class="tx" id="t96" style="left:388.30px;top:1308.00px;font-size:17.5px;color:#4a4a4f;font-family:'Liberation Sans', sans-serif;transform:scale(0.9069,1.0000);">Finish: 123 ms</div>
<div class="tx" id="t97" style="left:535.00px;top:1308.00px;font-size:17.5px;color:#4a4a4f;font-family:'Liberation Sans', sans-serif;transform:scale(0.9380,1.0000);">DOMContentLoaded: 38 ms</div>
<div class="tx" id="t98" style="left:782.30px;top:1308.00px;font-size:17.5px;color:#4a4a4f;font-family:'Liberation Sans', sans-serif;transform:scale(0.9130,1.0000);">load: 46 ms</div>
<div class="tx" id="t99" style="left:1204.20px;top:938.00px;font-size:15px;color:#a0a0a0;font-family:'Liberation Sans', sans-serif;transform:scale(0.8150,1.0000);">?</div>
<div class="tx" id="t100" style="left:1204.20px;top:966.00px;font-size:15px;color:#a0a0a0;font-family:'Liberation Sans', sans-serif;transform:scale(0.8150,1.0000);">?</div>
<div class="tx" id="t101" style="left:1204.20px;top:995.00px;font-size:15px;color:#a0a0a0;font-family:'Liberation Sans', sans-serif;transform:scale(0.8150,1.0000);">?</div>
<div class="tx" id="t102" style="left:1204.20px;top:1023.00px;font-size:15px;color:#a0a0a0;font-family:'Liberation Sans', sans-serif;transform:scale(0.8150,1.0000);">?</div>
<div class="tx" id="t103" style="left:1204.20px;top:1051.00px;font-size:15px;color:#a0a0a0;font-family:'Liberation Sans', sans-serif;transform:scale(0.8150,1.0000);">?</div>
<div class="tx" id="t104" style="left:1204.20px;top:1080.00px;font-size:15px;color:#a0a0a0;font-family:'Liberation Sans', sans-serif;transform:scale(0.8150,1.0000);">?</div>
<div class="tx" id="t105" style="left:1204.20px;top:1109.00px;font-size:15px;color:#a0a0a0;font-family:'Liberation Sans', sans-serif;transform:scale(0.8150,1.0000);">?</div>
<div class="tx" id="t106" style="left:1204.20px;top:1137.00px;font-size:15px;color:#a0a0a0;font-family:'Liberation Sans', sans-serif;transform:scale(0.8150,1.0000);">?</div>
<div class="tx" id="t107" style="left:1204.20px;top:1205.00px;font-size:15px;color:#a0a0a0;font-family:'Liberation Sans', sans-serif;transform:scale(0.8150,1.0000);">?</div>
<div class="tx" id="t108" style="left:1204.20px;top:1233.00px;font-size:15px;color:#a0a0a0;font-family:'Liberation Sans', sans-serif;transform:scale(0.8150,1.0000);">?</div>
<div class="tx" id="t109" style="left:1204.20px;top:1262.00px;font-size:15px;color:#a0a0a0;font-family:'Liberation Sans', sans-serif;transform:scale(0.8150,1.0000);">?</div>
<div class="tx" id="t110" style="left:1204.20px;top:1290.00px;font-size:15px;color:#a0a0a0;font-family:'Liberation Sans', sans-serif;transform:scale(0.8150,1.0000);">?</div>
<div class="tx" id="t111" style="left:1204.20px;top:1318.00px;font-size:15px;color:#a0a0a0;font-family:'Liberation Sans', sans-serif;transform:scale(0.8150,1.0000);">?</div>
<div class="tx" id="t112" style="left:1509.50px;top:755.00px;font-size:15px;color:#333;font-family:'Liberation Sans', sans-serif;transform:scale(0.9588,1.0000);">?</div>
<div class="tx" id="t113" style="left:2.90px;top:519.40px;font-size:15.5px;color:#f0fff0;font-family:'Liberation Mono', monospace;transform:scale(0.9783,1.2000);">200</div>
<div class="tx" id="t114" style="left:2.90px;top:556.60px;font-size:15.5px;color:#8d44c9;font-family:'Liberation Mono', monospace;transform:scale(0.9783,1.2000);">404</div>
</body></html>
